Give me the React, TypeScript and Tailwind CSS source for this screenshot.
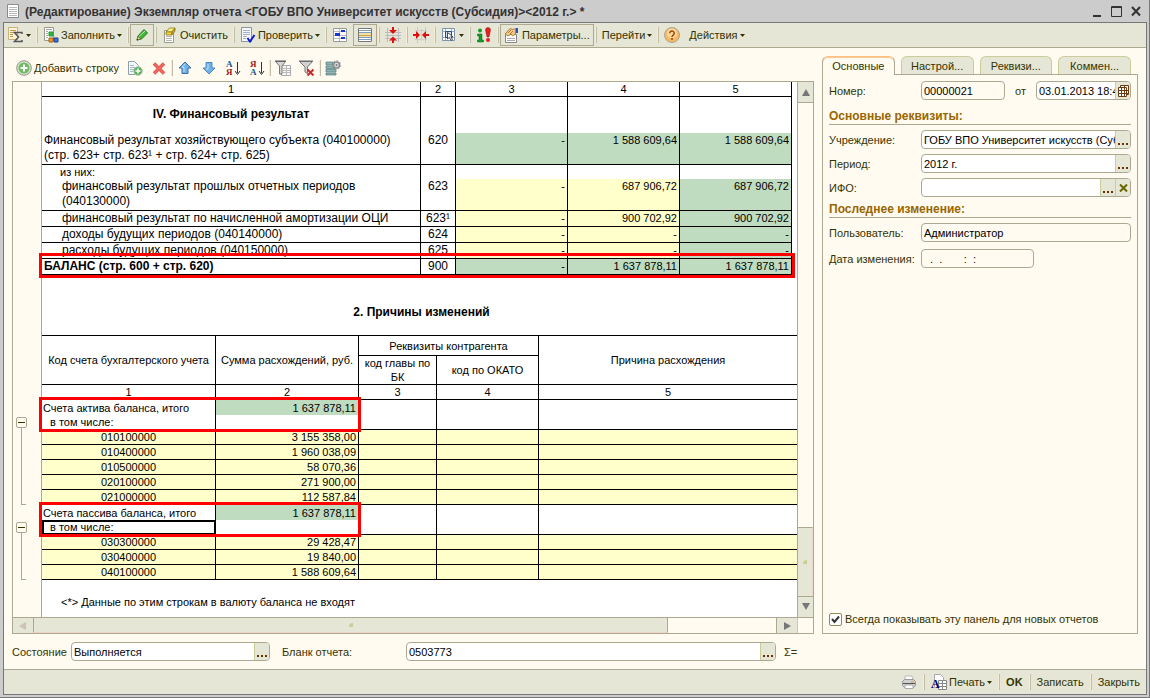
import React, {PropsWithChildren, ReactNode} from 'react'
import clsx from 'clsx'

/* ---------- Icons ---------- */
const Icon = ({children, className}: PropsWithChildren<{ className?: string }>) => (
    <svg width="16" height="16" viewBox="0 0 16 16" fill="none" aria-hidden="true"
         className={clsx('shrink-0', className)}>
        {children}
    </svg>
)

const Caret = () => (
    <svg width="5" height="3" viewBox="0 0 5 3" fill="#333300" aria-hidden="true" className="shrink-0">
        <path d="M0 0h5L2.500 3z"/>
    </svg>
)

const PageIcon = () => (
    <Icon>
        <path d="M2.500 1.500h11v13h-11z" fill="#fff" stroke="#8a8a8a"/>
        <path d="M4 4.500h8M4 6.500h8M4 8.500h8M4 10.500h8M4 12.500h8" stroke="#b9b9b9"/>
    </Icon>
)

const SumIcon = () => (
    <Icon>
        <path d="M.5.500h9v12h-9z" fill="#fff3d8" stroke="#c9b27c"/>
        <path d="M2 3.500h6M2 5.500h4M2 7.500h3M2 9.500h3" stroke="#c39a4a"/>
        <path d="M14 7V5.500H6.500L10.500 10 6.500 14.500H14V13" stroke="#555" strokeWidth="1.500"/>
    </Icon>
)

const FillIcon = () => (
    <Icon>
        <path d="M1.500.500h9v13h-9z" fill="#fff" stroke="#9a9a8a"/>
        <path d="M3 2.500h6M3 4.500h2M3 6.500h2M3 8.500h2M3 10.500h2" stroke="#aaa"/>
        <path d="M6 5h4v4H6z" fill="#3cb34a" stroke="#1f9a2c"/>
        <path d="M6 11h4v4H6z" fill="#f39a2d" stroke="#a85e0c"/>
        <path d="M11 11h4v4h-4z" fill="#3f72d8" stroke="#1d418f"/>
    </Icon>
)

const PencilIcon = () => (
    <Icon>
        <path d="M3 13l1-4 6-6.500L13.500 6 7.500 12z" fill="#43b53c" stroke="#1e7a1c"/>
        <path d="M5 9.500L11 4" stroke="#b6edaa"/>
        <path d="M3 13l1-3.500L6.500 12z" fill="#f6dfa6" stroke="#6b5a2a" strokeWidth=".6"/>
        <path d="M2.500 13.500l1-1.500 1 1z" fill="#222"/>
    </Icon>
)

const EraserIcon = () => (
    <Icon>
        <path d="M2.500 3.500h9v12h-9z" fill="#fff" stroke="#9a9a8a"/>
        <path d="M4 9.500h6M4 11.500h6M4 13.500h6" stroke="#b5b5b5"/>
        <path d="M4 5l3.500-4h5.500L10 5z" fill="#fdf08a" stroke="#8c7514" strokeWidth=".8"/>
        <path d="M4 5h6v3H4z" fill="#f2d84a" stroke="#8c7514" strokeWidth=".8"/>
        <path d="M10 5l3-4v3l-3 4z" fill="#cfae2a" stroke="#8c7514" strokeWidth=".8"/>
    </Icon>
)

const CheckPageIcon = () => (
    <Icon>
        <path d="M1.500.500h10v14h-10z" fill="#f5f7ff" stroke="#8d93a8"/>
        <path d="M3 3.500h7M3 5.500h7M3 7.500h7M3 9.500h4M3 11.500h3" stroke="#a9afc4"/>
        <path d="M7.500 11l2.500 3.500L14.500 8" stroke="#0a1ed2" strokeWidth="2"/>
    </Icon>
)

const TreeIcon = () => (
    <Icon>
        <path d="M1.500 1.500h13v13h-13z" fill="#fff" stroke="#999"/>
        <path d="M7.500 2v12M2 4.500h12M2 8.500h12M2 11.500h12" stroke="#bbb"/>
        <path d="M9 3h4v2H9zM3 6h5v3H3zM9 10h4v2H9z" fill="#1438d6"/>
    </Icon>
)

const RowsIcon = () => (
    <Icon>
        <path d="M1.500 1.500h13v13h-13z" fill="#fff" stroke="#777"/>
        <path d="M2 3.500h12M2 5.500h12M2 10.500h12M2 12.500h12" stroke="#7f9fc0"/>
        <path d="M2 6h12v4H2z" fill="#f4dfa0"/>
        <path d="M2 8.500h12" stroke="#c8a758"/>
    </Icon>
)

const SqueezeRowsIcon = () => (
    <Icon>
        <path d="M0 5.500h16M0 8.500h16M0 11.500h16M2.500 1v14M13.500 1v14" stroke="#bbb"/>
        <path d="M8 0v3M8 16v-3" stroke="#e01010" strokeWidth="2"/>
        <path d="M4 3h8L8 7zM4 13.500h8L8 9.500z" fill="#e01010"/>
    </Icon>
)

const SqueezeColsIcon = () => (
    <Icon>
        <path d="M4.500 0v16M8.500 2v12M12.500 0v16M2 3.500h12M2 12.500h12" stroke="#ccc"/>
        <path d="M0 8h3M16 8h-3" stroke="#e01010" strokeWidth="2"/>
        <path d="M3 4v8l4-4zM13 4v8L9 8z" fill="#e01010"/>
    </Icon>
)

const SelectIcon = () => (
    <Icon>
        <path d="M1.500 1.500h12v12h-12z" fill="#fff" stroke="#7d93ad"/>
        <path d="M4.500 2v11M10.500 2v11M2 4.500h11M2 10.500h11" stroke="#9fb2c8"/>
        <path d="M4.500 4.500h6v6h-6z" fill="#cfe0f2" stroke="#1f4d80"/>
        <path d="M6.500 5.500v6.500l1.800-1.600 1.700 3 1.500-1-1.700-2.600h2.200z" fill="#fff" stroke="#222"
              strokeWidth=".8"/>
    </Icon>
)

const InfoIcon = () => (
    <Icon>
        <circle cx="4" cy="3.500" r="2" fill="#169a28"/>
        <path d="M1.500 7H6v6h1.500v2H1.500v-2H3V9H1.500z" fill="#169a28" stroke="#0b6418" strokeWidth=".5"/>
        <path d="M9.500 3a2.500 2.500 0 015 0L13 10h-2z" fill="#e62020" stroke="#9a0c0c" strokeWidth=".5"/>
        <circle cx="12" cy="13" r="2" fill="#e62020"/>
    </Icon>
)

const ParamsIcon = () => (
    <Icon>
        <path d="M1.500 7.500h11v8h-11z" fill="#fff" stroke="#888"/>
        <path d="M3 11.500h8M3 13.500h8" stroke="#aaa"/>
        <path d="M1 7l5-5.500 3 1 2.500-1V7L8.500 9 7 7 4 9z" fill="#f3c983" stroke="#9a6c27" strokeWidth=".8"/>
        <path d="M4 6l3-3M6 7l3-3" stroke="#9a6c27" strokeWidth=".8"/>
        <path d="M12 1h2v5h-2z" fill="#2854c8"/>
    </Icon>
)

const HelpIcon = () => (
    <Icon>
        <circle cx="8" cy="8" r="7.500" fill="#f8b861" stroke="#a9a596"/>
        <circle cx="8" cy="6.500" r="5" fill="#ffe2b3" opacity=".7"/>
        <path d="M5.800 6.200a2.200 2.200 0 114 1.300C9 8.300 8 8.500 8 10" stroke="#8a4a12" strokeWidth="1.500"/>
        <circle cx="8" cy="12" r="1" fill="#8a4a12"/>
    </Icon>
)

const AddIcon = () => (
    <Icon>
        <circle cx="8" cy="8" r="7.300" fill="#d9dfcf" stroke="#8f9a86"/>
        <circle cx="8" cy="8" r="5.500" fill="#6fbb62"/>
        <path d="M8 4.500v7M4.500 8h7" stroke="#fff" strokeWidth="2"/>
    </Icon>
)

const AddCopyIcon = () => (
    <Icon>
        <path d="M1.500 1.500h6l4 4v9h-10z" fill="#f4f8fa" stroke="#8aa0a8"/>
        <path d="M3 5.500h4M3 7.500h6M3 9.500h4M3 11.500h3" stroke="#a9bac0"/>
        <circle cx="11" cy="11" r="4.300" fill="#58b357" stroke="#b9c6b0"/>
        <path d="M11 8.500v5M8.500 11h5" stroke="#fff" strokeWidth="1.500"/>
    </Icon>
)

const DeleteIcon = () => (
    <Icon>
        <path d="M3 3.500l10 10M13 3.500l-10 10" stroke="#d9564c" strokeWidth="3.500"/>
        <path d="M3 3.500l10 10M13 3.500l-10 10" stroke="#f2685c" strokeWidth="1.800"/>
    </Icon>
)

const UpIcon = () => (
    <Icon>
        <path d="M8 2l6 6h-3v5.500H5V8H2z" fill="#6fb2ea" stroke="#3a6f9f"/>
        <path d="M8 4L5 7.500h2V12" stroke="#c3e2fa"/>
    </Icon>
)

const DownIcon = () => (
    <Icon>
        <path d="M8 14L2 8h3V2.500h6V8h3z" fill="#6fb2ea" stroke="#4c8ac0"/>
        <path d="M7 4v5H5" stroke="#c3e2fa"/>
    </Icon>
)

const SortIcon = ({top, bottom, desc}: { top: string, bottom: string, desc?: boolean }) => (
    <Icon className="overflow-visible">
        <text x="1" y="7" fontSize="9" fontWeight="700" fontFamily="Liberation Serif, serif"
              fill={desc ? '#a01818' : '#1b4f8a'}>{top}</text>
        <text x="1" y="15" fontSize="9" fontWeight="700" fontFamily="Liberation Serif, serif"
              fill={desc ? '#1b4f8a' : '#a01818'}>{bottom}</text>
        <path d="M12.500 2v11M10 11l2.500 3.500L15 11" stroke="#333"/>
    </Icon>
)

const FilterIcon = () => (
    <Icon>
        <path d="M6.500 5.500h9v10h-9z" fill="#f7f7f7" stroke="#aaa"/>
        <path d="M8 8.500h7M8 10.500h7M8 12.500h7M11.500 6v9" stroke="#bbb"/>
        <path d="M.5 1.500h10L7 6v8H4.500V6z" fill="#d5d5d5" stroke="#777"/>
        <path d="M0 1h11" stroke="#555"/>
    </Icon>
)

const FilterOffIcon = () => (
    <Icon>
        <path d="M.5 1.500h13L8.500 7v6.500L6 12V7z" fill="#d0d0d0" stroke="#777"/>
        <path d="M0 1h14" stroke="#666"/>
        <path d="M8.500 9.500l6 6M14.500 9.500l-6 6" stroke="#c92a2a" strokeWidth="2"/>
    </Icon>
)

const ListSettingsIcon = () => (
    <Icon>
        <path d="M1 2h7v3H1zM1 6h9v2.500H1zM1 9.500h10V12H1zM1 13h10v2H1z" fill="#8fb3b3" stroke="#4f7f80"
              strokeWidth=".7"/>
        <circle cx="11.500" cy="5" r="3" fill="#ddd" stroke="#8b8b8b" strokeWidth="1.500"/>
        <circle cx="11.500" cy="5" r="4.200" stroke="#8b8b8b" strokeWidth="1" strokeDasharray="1.600 1.600"/>
        <circle cx="11.500" cy="5" r="1" fill="#777"/>
    </Icon>
)

const PrinterIcon = () => (
    <Icon>
        <path d="M4 2h7l1 5H4z" fill="#fff" stroke="#bbb"/>
        <path d="M1.500 7.500l2-2h9l2 2v4l-2 2h-9l-2-2z" fill="#d0d0d0" stroke="#999"/>
        <path d="M2 9.500h12" stroke="#555"/>
        <path d="M4 11h8v3.500H4z" fill="#fff" stroke="#aaa"/>
        <path d="M10 8h3" stroke="#d8a050"/>
    </Icon>
)

const PrintFormIcon = () => (
    <Icon className="overflow-visible">
        <path d="M3.500.500h6l3 3v10h-9z" fill="#fff" stroke="#aaa"/>
        <path d="M7.500 6.500h8v9h-8z" fill="#fff" stroke="#888"/>
        <path d="M8 9.500h7M8 12.500h7M11.500 7v8" stroke="#888"/>
        <text x="0" y="14" fontSize="12" fontWeight="700" fontFamily="Liberation Serif, serif" fill="#00007a">A</text>
    </Icon>
)

const CalendarIcon = () => (
    <svg width="11" height="12" viewBox="0 0 11 12" fill="none" aria-hidden="true">
        <path d="M2.500.500h8v9h-8z" fill="#fff" stroke="#6b3a10"/>
        <path d="M.5 2.500h8v9h-8z" fill="#fff" stroke="#6b3a10"/>
        <path d="M1 5.500h9M1 8.500h9M3.500 3v8M6.500 1v10" stroke="#6b3a10"/>
    </svg>
)

/* ---------- Controls ---------- */
const Separator = () => <span className="h-4 w-[2px] shrink-0 border-l border-[#f7ecd6] bg-[#c2bda4]"/>

type ToolButtonProps = PropsWithChildren<{ icon?: ReactNode, menu?: boolean, pressed?: boolean, title?: string }>

const ToolButton = ({icon, menu, pressed, title, children}: ToolButtonProps) => (
    <button
        type="button"
        aria-label={title}
        className={clsx(
            'flex h-[22px] shrink-0 items-center gap-[2px] border px-[3px]',
            pressed ? 'border-[#ada990]' : 'border-transparent',
        )}
    >
        {icon}
        {children && <span className="whitespace-nowrap">{children}</span>}
        {menu && <Caret/>}
    </button>
)

type FieldProps = {
    id: string
    value: string
    tinted?: boolean
    className?: string
    buttons?: { name: string, content: ReactNode }[]
}

const Field = ({id, value, tinted, className, buttons = []}: FieldProps) => (
    <div className={clsx(
        'flex h-[19px] min-w-0 overflow-hidden rounded border border-[#ada990]',
        tinted ? 'bg-[#fffbf0]' : 'bg-white',
        className,
    )}>
        <input id={id} defaultValue={value}
               className="min-w-0 flex-1 bg-transparent pl-[2px] text-black outline-none"/>
        {buttons.map((button) => (
            <button key={button.name} type="button" aria-label={button.name}
                    className="flex w-[15px] shrink-0 items-center justify-center border-l border-[#cccc99] bg-[#e6e6d6]">
                {button.content}
            </button>
        ))}
    </div>
)

const dots = {
    name: 'Выбрать',
    content: (
        <svg width="10" height="14" viewBox="0 0 10 14" fill="#663300" aria-hidden="true">
            <path d="M0 10h2v2H0zM4 10h2v2H4zM8 10h2v2H8z"/>
        </svg>
    ),
}
const clear = {
    name: 'Очистить поле',
    content: (
        <svg width="9" height="8" viewBox="0 0 9 8" stroke="#666600" strokeWidth="2" aria-hidden="true">
            <path d="M1 .5l7 7M8 .5l-7 7"/>
        </svg>
    ),
}
const calendar = {name: 'Календарь', content: <CalendarIcon/>}

/* ---------- Report sheet ---------- */
const GREEN = 'bg-[#c0dcc0]'
const YELLOW = 'bg-[#ffffcc]'

type BalanceRow = {
    title: ReactNode
    code: string
    values: string[]
    fills: string[]
    height: string
    indent?: boolean
    bold?: boolean
}

const balanceRows: BalanceRow[] = [
    {
        title: <>финансовый результат прошлых отчетных периодов<br/>(040130000)</>,
        code: '623', values: ['-', '687 906,72', '687 906,72'], fills: [YELLOW, YELLOW, GREEN],
        height: 'h-8', indent: true,
    },
    {
        title: 'финансовый результат по начисленной амортизации ОЦИ',
        code: '623¹', values: ['-', '900 702,92', '900 702,92'], fills: [YELLOW, YELLOW, GREEN],
        height: 'h-4', indent: true,
    },
    {
        title: 'доходы будущих периодов (040140000)',
        code: '624', values: ['-', '-', '-'], fills: [YELLOW, YELLOW, GREEN], height: 'h-4', indent: true,
    },
    {
        title: 'расходы будущих периодов (040150000)',
        code: '625', values: ['-', '-', '-'], fills: [YELLOW, YELLOW, GREEN], height: 'h-4', indent: true,
    },
    {
        title: 'БАЛАНС (стр. 600 + стр. 620)',
        code: '900', values: ['-', '1 637 878,11', '1 637 878,11'], fills: [GREEN, GREEN, GREEN],
        height: 'h-4', bold: true,
    },
]

const BalanceLine = ({row}: { row: BalanceRow }) => (
    <tr className={row.height}>
        <td className={clsx('border-r border-b border-black', row.indent ? 'pl-5' : 'pl-[2px]',
            row.bold && 'font-bold')}>{row.title}</td>
        <td className="border-r border-b border-black text-center">{row.code}</td>
        {row.values.map((value, i) => (
            <td key={i} className={clsx('border-r border-b border-black pr-[2px] text-right text-[11px]', row.fills[i])}>
                {value}
            </td>
        ))}
    </tr>
)

const BalanceTable = () => (
    <div className="relative pr-[5px]">
        <table className="w-full table-fixed border-separate border-spacing-0 text-[12px] leading-[15px] [&_td]:align-top">
            <colgroup>
                <col/>
                <col className="w-[35px]"/>
                <col className="w-[112px]"/>
                <col className="w-[112px]"/>
                <col className="w-[112px]"/>
            </colgroup>
            <thead>
            <tr className="h-[15px] leading-[14px]">
                {[1, 2, 3, 4, 5].map((n) => (
                    <th key={n} className="border-r border-b border-black text-[11px] font-normal">{n}</th>
                ))}
            </tr>
            </thead>
            <tbody>
            <tr className="h-9">
                <td className="border-r border-black pt-[10px] text-center font-bold">IV. Финансовый результат</td>
                <td className="border-r border-black"/>
                <td className="border-r border-black"/>
                <td className="border-r border-black"/>
                <td className="border-r border-black"/>
            </tr>
            <BalanceLine row={{
                title: <>Финансовый результат хозяйствующего субъекта (040100000)<br/>(стр. 623+ стр. 623¹ + стр. 624+ стр. 625)</>,
                code: '620', values: ['-', '1 588 609,64', '1 588 609,64'], fills: [GREEN, GREEN, GREEN],
                height: 'h-8',
            }}/>
            <tr className="h-[14px] leading-[14px]">
                <td className="border-r border-black pl-[18px] text-[11px]">из них:</td>
                <td className="border-r border-black"/>
                <td className="border-r border-black"/>
                <td className="border-r border-black"/>
                <td className="border-r border-black"/>
            </tr>
            {balanceRows.map((row) => <BalanceLine key={row.code} row={row}/>)}
            </tbody>
        </table>
        <div className="absolute -bottom-[3px] -left-[3px] right-[2px] h-[25px] border-3 border-[#ff0000]"/>
    </div>
)

const groups = [
    {
        title: 'Счета актива баланса, итого',
        total: '1 637 878,11',
        rows: [
            ['010100000', '3 155 358,00'],
            ['010400000', '1 960 038,09'],
            ['010500000', '58 070,36'],
            ['020100000', '271 900,00'],
            ['021000000', '112 587,84'],
        ],
    },
    {
        title: 'Счета пассива баланса, итого',
        total: '1 637 878,11',
        selected: true,
        rows: [
            ['030300000', '29 428,47'],
            ['030400000', '19 840,00'],
            ['040100000', '1 588 609,64'],
        ],
    },
]

const headCell = 'border-r border-b border-black font-normal'

const ReasonsTable = () => (
    <table className="w-full table-fixed border-separate border-spacing-0 border-t border-black text-[11px] leading-[14px]">
        <colgroup>
            <col className="w-[174px]"/>
            <col className="w-[143px]"/>
            <col className="w-[78px]"/>
            <col className="w-[102px]"/>
            <col/>
        </colgroup>
        <thead>
        <tr className="h-5">
            <th rowSpan={2} className={headCell}>Код счета бухгалтерского учета</th>
            <th rowSpan={2} className={headCell}>Сумма расхождений, руб.</th>
            <th colSpan={2} className={headCell}>Реквизиты контрагента</th>
            <th rowSpan={2} className="border-b border-black font-normal">Причина расхождения</th>
        </tr>
        <tr className="h-[29px]">
            <th className={headCell}>код главы по БК</th>
            <th className={headCell}>код по ОКАТО</th>
        </tr>
        <tr className="h-[15px]">
            {[1, 2, 3, 4].map((n) => <th key={n} className={headCell}>{n}</th>)}
            <th className="border-b border-black font-normal">5</th>
        </tr>
        </thead>
        {groups.map((group) => (
            <tbody key={group.title}>
            <tr className="h-[15px]">
                <td className="relative border-r border-black pl-px">
                    {group.title}
                    <div className="absolute -top-[3px] -left-[3px] h-[35px] w-[322px] border-3 border-[#ff0000]"/>
                </td>
                <td className={clsx('border-r border-black pr-[2px] text-right', GREEN)}>{group.total}</td>
                <td className="border-r border-black"/>
                <td className="border-r border-black"/>
                <td/>
            </tr>
            <tr className="h-[15px]">
                <td className={clsx('border-r border-b border-black pl-2',
                    group.selected && 'outline-2 -outline-offset-2 outline-black')}>в том числе:</td>
                <td className="border-r border-b border-black"/>
                <td className="border-r border-b border-black"/>
                <td className="border-r border-b border-black"/>
                <td className="border-b border-black"/>
            </tr>
            {group.rows.map(([account, sum]) => (
                <tr key={account} className={clsx('h-[15px]', YELLOW)}>
                    <td className="border-r border-b border-black text-center">{account}</td>
                    <td className="border-r border-b border-black pr-[2px] text-right">{sum}</td>
                    <td className="border-r border-b border-black"/>
                    <td className="border-r border-b border-black"/>
                    <td className="border-b border-black"/>
                </tr>
            ))}
            </tbody>
        ))}
    </table>
)

const GroupToggle = ({line}: { line: string }) => (
    <div className="flex flex-col pl-[3px]">
        <button type="button" aria-label="Свернуть группу"
                className="flex h-[11px] w-[11px] items-center justify-center rounded-xs border border-[#ada990] bg-[#fffbf0]">
            <span className="h-px w-[7px] bg-[#333300]"/>
        </button>
        <span className={clsx('ml-[5px] w-[5px] border-b border-l border-[#ada990]', line)}/>
    </div>
)

const Arrow = ({d, muted}: { d: string, muted?: boolean }) => (
    <svg width="8" height="8" viewBox="0 0 8 8" fill={muted ? '#ccc4b4' : '#77777a'} aria-hidden="true">
        <path d={d}/>
    </svg>
)

const scrollButton = 'flex shrink-0 items-center justify-center border-[#ada990] bg-[#e6e6d6]'

const Sheet = () => (
    <div className="flex flex-1 flex-col border border-[#ada990]">
        <div className="flex flex-1">
            <div className="flex w-7 shrink-0 flex-col gap-[17px] pt-[335px]">
                <GroupToggle line="h-[77px]"/>
                <GroupToggle line="h-[47px]"/>
            </div>
            <div className="min-w-0 flex-1 border-l border-[#ada990] bg-white text-black">
                <BalanceTable/>
                <h2 className="pt-[29px] pb-[15px] pl-1 text-center text-[12px] leading-4 font-bold">2. Причины изменений</h2>
                <ReasonsTable/>
                <p className="pt-[15px] pb-2 pl-[19px] text-[11px] leading-[14px]">
                    {'<*> Данные по этим строкам в валюту баланса не входят'}
                </p>
            </div>
            <div className="flex w-4 shrink-0 flex-col border-l border-[#ada990]">
                <div className={clsx(scrollButton, 'h-[21px] border-b')}><Arrow d="M4 1l4 7H0z"/></div>
                <div className="flex-1"/>
                <div className="flex h-[69px] items-center justify-center border-t border-r border-t-[#ada990] border-r-[#f0d4c8] bg-[#e6e6d6]">
                    <span className="size-1 rounded-tl bg-[#cccc99]"/>
                </div>
                <div className={clsx(scrollButton, 'h-[21px] border-t')}><Arrow d="M0 0h8L4 7z"/></div>
            </div>
        </div>
        <div className="flex h-4 border-t border-[#ada990]">
            <div className={clsx(scrollButton, 'w-5')}><Arrow muted d="M0 4l7-4v8z"/></div>
            <div className="flex min-w-0 flex-[634] items-center justify-center border-x border-b border-x-[#ada990] border-b-[#f0d4c8] bg-[#e6e6d6]">
                <span className="size-1 rounded-tl bg-[#cccc99]"/>
            </div>
            <div className="flex-[108]"/>
            <div className={clsx(scrollButton, 'w-[21px] border-l')}><Arrow d="M1 0l7 4-7 4z"/></div>
            <div className="w-4 shrink-0 border-l border-[#cccc99]"/>
        </div>
    </div>
)

/* ---------- Side panel ---------- */
const tabs = ['Основные', 'Настрой...', 'Реквизи...', 'Коммен...']

const Row = ({id, label, children}: PropsWithChildren<{ id: string, label: string }>) => (
    <div className="flex items-center">
        <label htmlFor={id} className="w-[92px] shrink-0 whitespace-nowrap">{label}</label>
        {children}
    </div>
)

const SectionTitle = ({children}: PropsWithChildren) => (
    <h3 className="border-b border-[#ada990] text-[12px] leading-[15px] font-bold text-[#996600]">{children}</h3>
)

const SidePanel = () => (
    <aside className="flex w-[316px] shrink-0 flex-col pt-2">
        <div role="tablist" className="flex gap-[6px] pr-[7px]">
            {tabs.map((tab, i) => (
                <button key={tab} type="button" role="tab" aria-selected={i === 0}
                        className={clsx(
                            'flex-1 rounded-t-md border border-b-0',
                            i === 0
                                ? 'relative -mb-px h-[19px] border-[#ada990] border-t-[#ffc080] bg-[#fffbf0] shadow-[inset_0_1px_#ffc896]'
                                : 'h-[18px] border-[#cccc99] bg-[#e6e6d6]',
                        )}>
                    {tab}
                </button>
            ))}
        </div>
        <div className="flex flex-1 flex-col border border-[#ada990] p-[6px]">
            <div className="flex flex-col gap-[5px]">
                <Row id="number" label="Номер:">
                    <Field id="number" value="00000021" tinted className="w-[84px]"/>
                    <label htmlFor="date" className="flex-1 text-center">от</label>
                    <Field id="date" value="03.01.2013 18:45" className="w-[95px]" buttons={[calendar]}/>
                </Row>
                <div className="pt-1"><SectionTitle>Основные реквизиты:</SectionTitle></div>
                <Row id="org" label="Учреждение:">
                    <Field id="org" value="ГОБУ ВПО Университет искусств (Субсидия)" className="flex-1" buttons={[dots]}/>
                </Row>
                <Row id="period" label="Период:">
                    <Field id="period" value="2012 г." className="flex-1" buttons={[dots]}/>
                </Row>
                <Row id="ifo" label="ИФО:">
                    <Field id="ifo" value="" className="flex-1" buttons={[dots, clear]}/>
                </Row>
                <SectionTitle>Последнее изменение:</SectionTitle>
                <div className="flex flex-col gap-[7px]">
                    <Row id="user" label="Пользователь:">
                        <Field id="user" value="Администратор" tinted className="flex-1"/>
                    </Row>
                    <Row id="changed" label="Дата изменения:">
                        <Field id="changed" value="  .  .       :  :" tinted className="w-[113px]"/>
                    </Row>
                </div>
            </div>
            <label className="mt-auto flex items-center gap-[3px] whitespace-nowrap">
                <span className="relative flex">
                    <input type="checkbox" defaultChecked
                           className="size-[13px] appearance-none rounded-xs border border-[#8f8c5a] bg-white"/>
                    <svg width="9" height="9" viewBox="0 0 9 9" fill="none" stroke="#333" strokeWidth="2"
                         aria-hidden="true" className="pointer-events-none absolute top-[2px] left-[2px]">
                        <path d="M1 4l2.500 3L8 1.500"/>
                    </svg>
                </span>
                Всегда показывать эту панель для новых отчетов
            </label>
        </div>
    </aside>
)

/* ---------- Window ---------- */
const TitleBar = () => (
    <header className="flex h-[22px] shrink-0 items-center gap-1 pr-[2px] pl-[2px] text-[#333]">
        <PageIcon/>
        <h1 className="min-w-0 flex-1 truncate pt-[2px] text-[12px] leading-4 font-bold">
            {'(Редактирование) Экземпляр отчета <ГОБУ ВПО Университет искусств (Субсидия)><2012 г.> *'}
        </h1>
        <div className="flex gap-1">
            <button type="button" aria-label="Свернуть">
                <Icon><path d="M4 13h8" stroke="#333" strokeWidth="2"/></Icon>
            </button>
            <button type="button" aria-label="Развернуть">
                <Icon><path d="M2.500 3.500h10v10h-10zM2.500 4.500h10" stroke="#333"/></Icon>
            </button>
            <button type="button" aria-label="Закрыть окно">
                <Icon><path d="M3 4l8 8.500M11 4l-8 8.500" stroke="#333" strokeWidth="2"/></Icon>
            </button>
        </div>
    </header>
)

const MainToolbar = () => (
    <div role="toolbar" className="flex h-[25px] shrink-0 items-center gap-px border-b border-[#ada990] bg-[#e6e6d6]">
        <ToolButton icon={<SumIcon/>} menu title="Итоги"/>
        <Separator/>
        <ToolButton icon={<FillIcon/>} menu>Заполнить</ToolButton>
        <Separator/>
        <ToolButton icon={<PencilIcon/>} pressed title="Редактирование"/>
        <Separator/>
        <ToolButton icon={<EraserIcon/>}>Очистить</ToolButton>
        <Separator/>
        <ToolButton icon={<CheckPageIcon/>} menu>Проверить</ToolButton>
        <Separator/>
        <ToolButton icon={<TreeIcon/>} title="Структура"/>
        <ToolButton icon={<RowsIcon/>} pressed title="Строки"/>
        <Separator/>
        <ToolButton icon={<SqueezeRowsIcon/>} title="Свернуть строки"/>
        <Separator/>
        <ToolButton icon={<SqueezeColsIcon/>} title="Свернуть колонки"/>
        <Separator/>
        <ToolButton icon={<SelectIcon/>} menu title="Выделение"/>
        <Separator/>
        <ToolButton icon={<InfoIcon/>} title="Сведения"/>
        <Separator/>
        <ToolButton icon={<ParamsIcon/>} pressed>Параметры...</ToolButton>
        <Separator/>
        <ToolButton menu>Перейти</ToolButton>
        <Separator/>
        <ToolButton icon={<HelpIcon/>} title="Справка"/>
        <ToolButton menu>Действия</ToolButton>
    </div>
)

const RowToolbar = () => (
    <div role="toolbar" className="flex h-[33px] shrink-0 items-center pt-[6px]">
        <ToolButton icon={<AddIcon/>}>Добавить строку</ToolButton>
        <ToolButton icon={<AddCopyIcon/>} title="Добавить копированием"/>
        <ToolButton icon={<DeleteIcon/>} title="Удалить"/>
        <Separator/>
        <ToolButton icon={<UpIcon/>} title="Вверх"/>
        <ToolButton icon={<DownIcon/>} title="Вниз"/>
        <ToolButton icon={<SortIcon top="А" bottom="Я"/>} title="По возрастанию"/>
        <ToolButton icon={<SortIcon top="Я" bottom="А" desc/>} title="По убыванию"/>
        <Separator/>
        <ToolButton icon={<FilterIcon/>} title="Отбор"/>
        <ToolButton icon={<FilterOffIcon/>} title="Отключить отбор"/>
        <Separator/>
        <ToolButton icon={<ListSettingsIcon/>} title="Настройка списка"/>
    </div>
)

const StatusRow = () => (
    <div className="flex items-center py-2">
        <label htmlFor="state" className="w-[59px] shrink-0">Состояние</label>
        <Field id="state" value="Выполняется" className="w-[199px]" buttons={[dots]}/>
        <label htmlFor="form" className="w-[136px] shrink-0 pl-3">Бланк отчета:</label>
        <Field id="form" value="0503773" className="flex-1" buttons={[dots]}/>
        <span className="w-[38px] shrink-0 pl-2">Σ=</span>
    </div>
)

const Footer = () => (
    <footer className="flex h-[25px] shrink-0 items-center justify-end gap-[2px] border-t border-[#ada990] bg-[#e6e6d6] pr-[2px]">
        <ToolButton icon={<PrinterIcon/>} title="Печать"/>
        <Separator/>
        <ToolButton icon={<PrintFormIcon/>} menu>Печать</ToolButton>
        <Separator/>
        <ToolButton><b>OK</b></ToolButton>
        <Separator/>
        <ToolButton>Записать</ToolButton>
        <Separator/>
        <ToolButton>Закрыть</ToolButton>
    </footer>
)

const App = () => {
    return (
        <div className="flex min-h-screen flex-col border-r border-b border-[#777] bg-[#ccc] pr-[2px] pb-[2px] pl-[3px] font-['Liberation_Sans',Arial,sans-serif] text-[11px] leading-4 text-[#333300]">
            <TitleBar/>
            <div className="flex flex-1 flex-col border border-[#777] bg-[#fffbf0]">
                <MainToolbar/>
                <main className="flex flex-1 gap-2 px-2">
                    <div className="flex min-w-0 flex-1 flex-col">
                        <RowToolbar/>
                        <Sheet/>
                        <StatusRow/>
                    </div>
                    <div className="flex pb-[35px]">
                        <SidePanel/>
                    </div>
                </main>
                <Footer/>
            </div>
        </div>
    )
}
export default App
